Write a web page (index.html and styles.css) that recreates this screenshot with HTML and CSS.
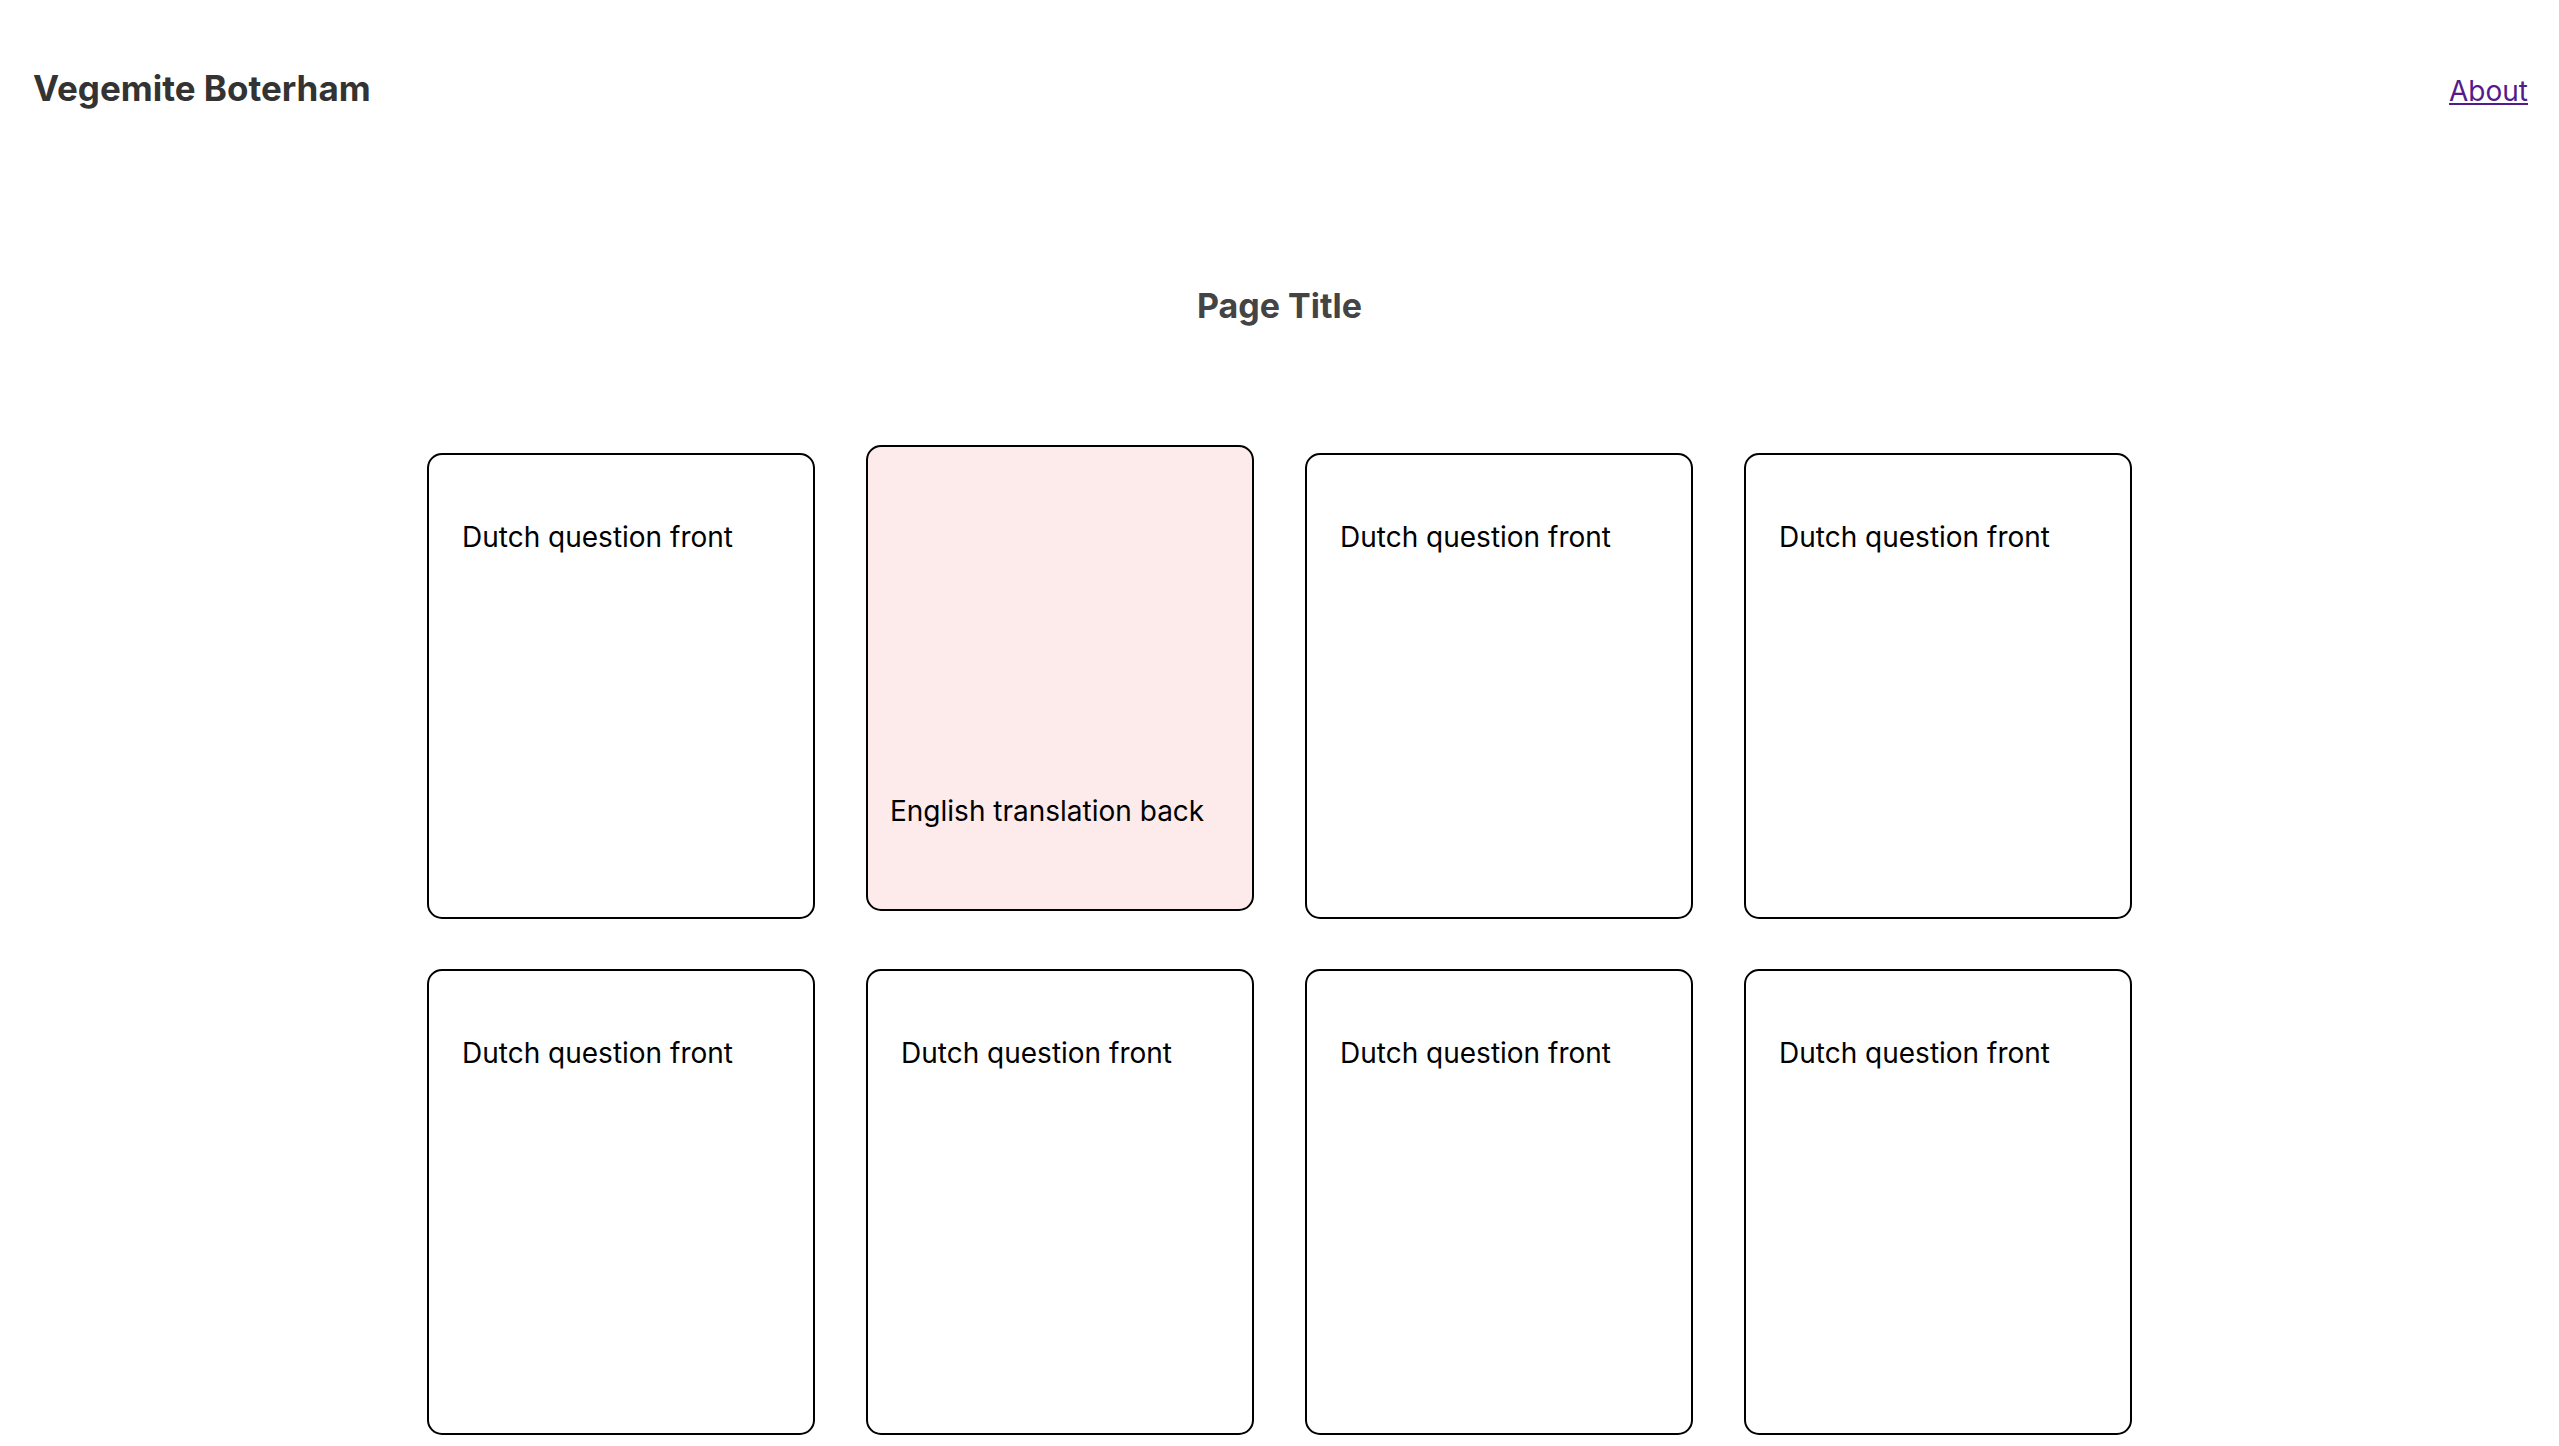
FILE: index.html
```html
<!DOCTYPE html>
<html lang="en">
  <head>
    <meta charset="UTF-8" />
    <meta name="viewport" content="width=device-width, initial-scale=1.0" />
    <title>Vegemite Boterham</title>

    <link rel="stylesheet" href="styles.css">
  </head>
  <body>
    <header class="topbar">
      <span class="brand">Vegemite Boterham</span>
      <a class="nav-link" href="#about">About</a>
    </header>

    <main>
      <h2 class="page-title">Page Title</h2>

      <div class="deck">
        <div class="card"><p>Dutch question front</p></div>
        <div class="card flipped"><p>English translation back</p></div>
        <div class="card"><p>Dutch question front</p></div>
        <div class="card"><p>Dutch question front</p></div>
        <div class="card"><p>Dutch question front</p></div>
        <div class="card"><p>Dutch question front</p></div>
        <div class="card"><p>Dutch question front</p></div>
        <div class="card"><p>Dutch question front</p></div>
      </div>
    </main>
  </body>
</html>
```

FILE: styles.css
```css
html,
body {
  margin: 0;
  box-sizing: border-box;
  font-family: Inter, "Noto Sans", sans-serif;
  background: #fff;
}

.topbar {
  display: flex;
  justify-content: space-between;
  align-items: center;
  padding: 67px 31px 0 33px;
}

.brand {
  font-size: 35px;
  font-weight: 700;
  color: #333;
}

.nav-link {
  padding-top: 5px;
  font-size: 28px;
  color: #551a8b;
}

.page-title {
  margin: 176px 0 0;
  text-align: center;
  font-size: 34px;
  font-weight: 700;
  color: #444;
}

.deck {
  display: grid;
  grid-template-columns: repeat(4, 388px);
  column-gap: 51px;
  row-gap: 50px;
  justify-content: center;
  margin-top: 127px;
}

.card {
  box-sizing: border-box;
  height: 466px;
  border: 2px solid #000;
  border-radius: 15px;
  padding: 65px 33px;
  background: #fff;
}

.card p {
  margin: 0;
  font-size: 28px;
  color: #000;
}

.card.flipped {
  display: flex;
  align-items: flex-end;
  padding: 0 22px 81px;
  background: #fdebeb;
  transform: translateY(-8px);
}
```
